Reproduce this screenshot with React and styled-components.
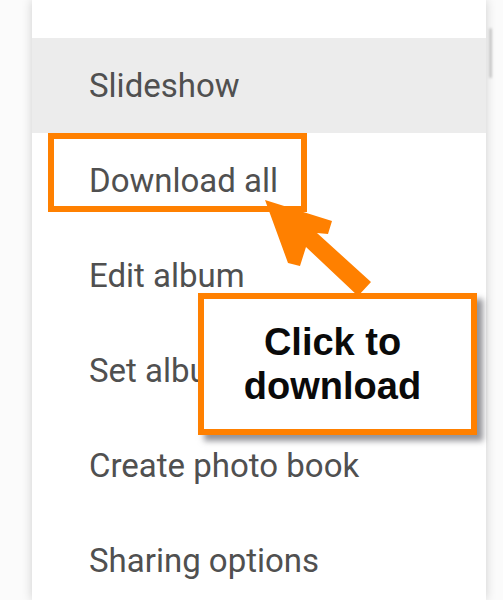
import React from "react";
import styled, { createGlobalStyle } from "styled-components";

const GlobalStyle = createGlobalStyle`
  html, body {
    margin: 0;
    padding: 0;
    background: #ffffff;
    overflow: hidden;
  }
`;

const Page = styled.div`
  width: 503px;
  height: 600px;
  background: #fbfbfb;
  overflow: hidden;
`;

const Panel = styled.div`
  position: relative;
  margin-left: 32px;
  width: 454px;
  height: 600px;
  padding-top: 38px;
  box-sizing: border-box;
  background: #ffffff;
  box-shadow: 0 0 10px rgba(0, 0, 0, 0.18);
`;

const Thumb = styled.div`
  position: absolute;
  right: -6px;
  top: 28px;
  width: 3px;
  height: 50px;
  border-radius: 2px;
  background: #c9c9c9;
  filter: blur(1px);
`;

const Menu = styled.ul`
  list-style: none;
  margin: 0;
  padding: 0;
`;

const Item = styled.li`
  position: relative;
  display: flex;
  align-items: center;
  height: 95px;
  padding-left: 57px;
  background: ${({ $active }) => ($active ? "#ececec" : "transparent")};
  font-family: Roboto, "Noto Sans", sans-serif;
  font-size: 33px;
  color: #505050;
`;

// orange frame drawn round "Download all"
const Highlight = styled.div`
  position: absolute;
  left: 16px;
  top: 0;
  width: 259px;
  height: 79px;
  box-sizing: border-box;
  border: 6px solid #ff8000;
`;

const Arrow = styled.svg`
  position: absolute;
  left: 0;
  top: 0;
  overflow: visible;
  pointer-events: none;
`;

const Callout = styled.div`
  position: absolute;
  left: 166px;
  top: 293px;
  width: 279px;
  height: 142px;
  box-sizing: border-box;
  padding-right: 10px;
  border: 6px solid #ff8000;
  background: #ffffff;
  box-shadow: 6px 6px 6px rgba(60, 60, 70, 0.55);
  display: flex;
  flex-direction: column;
  align-items: center;
  justify-content: center;
  font-family: "Liberation Sans", Arial, sans-serif;
  font-weight: 700;
  font-size: 38px;
  line-height: 44px;
  color: #0a0a0a;
  text-align: center;
`;

const items = [
  "Slideshow",
  "Download all",
  "Edit album",
  "Set album cover",
  "Create photo book",
  "Sharing options",
];

export default function App() {
  return (
    <Page>
      <GlobalStyle />
      <Panel>
        <Thumb />
        <Menu>
          {items.map((label, i) => (
            <Item key={label} $active={i === 0}>
              {i === 1 && <Highlight />}
              {label}
            </Item>
          ))}
        </Menu>
        <Arrow width="454" height="600" viewBox="0 0 454 600">
          <polygon
            fill="#ff8000"
            points="233,200 300,221 296,234 285,233 339,282 326,296 274,247 268,266 256,263"
          />
        </Arrow>
        <Callout>
          <span>Click to</span>
          <span>download</span>
        </Callout>
      </Panel>
    </Page>
  );
}
